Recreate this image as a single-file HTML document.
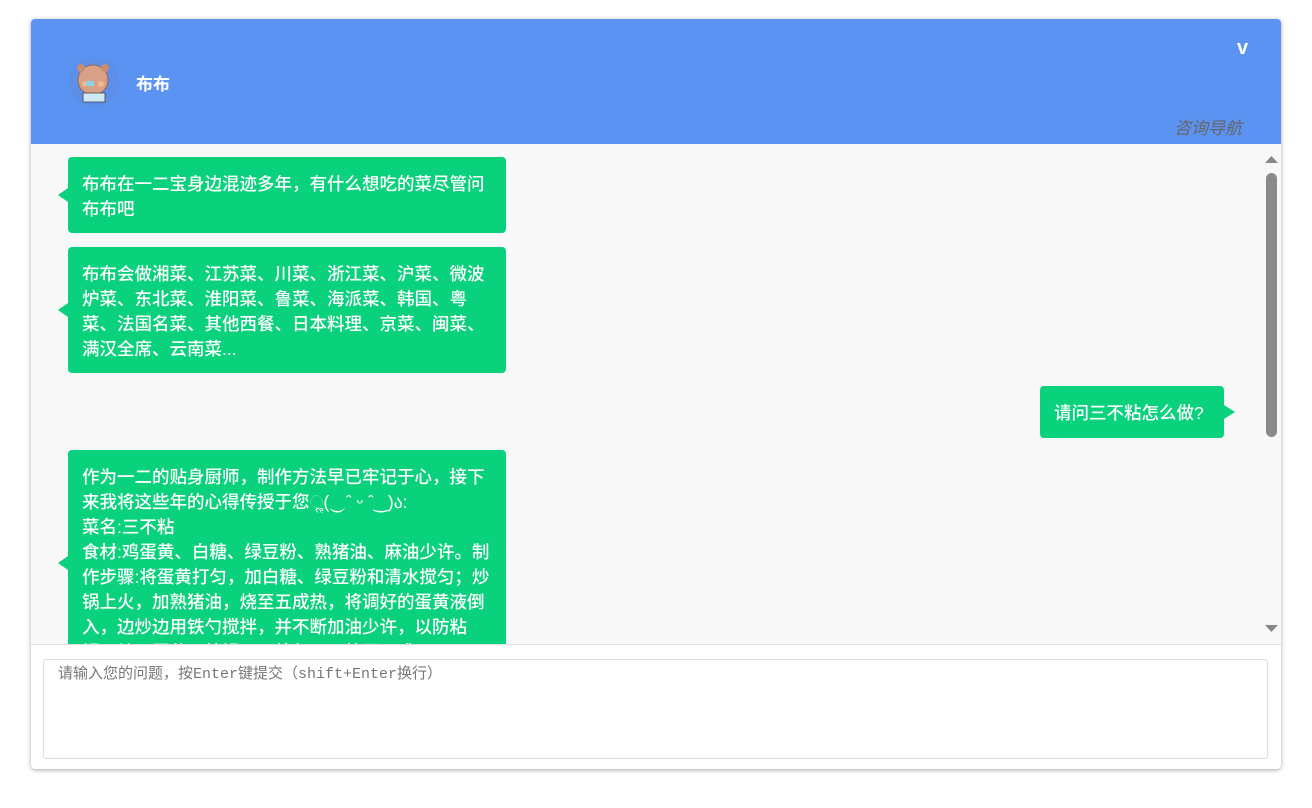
<!DOCTYPE html>
<html><head><meta charset="utf-8"><style>
*{box-sizing:border-box;margin:0;padding:0}
body{width:1312px;height:808px;background:#fff;font-family:"Liberation Sans","Noto Sans CJK SC",sans-serif;position:relative;overflow:hidden}
.win{position:absolute;left:31px;top:19px;width:1250px;height:750px;background:#fff;border-radius:4px;box-shadow:0 1px 5px rgba(0,0,0,.35);overflow:hidden}
.hd{position:absolute;left:0;top:0;width:1250px;height:125px;background:#5b93f2}
.av{position:absolute;left:38px;top:38px;width:50px;height:50px;border-radius:50%;background:#5d8fe8;overflow:hidden}
.name{position:absolute;left:105px;top:51px;color:#fff;font-size:17px;font-weight:bold}
.v{position:absolute;left:1206px;top:18px;color:#fff;font-size:20px;font-weight:bold}
.nav{position:absolute;left:1143px;top:95px;color:#666;font-size:17px;font-style:italic}
.chat{position:absolute;left:0;top:125px;width:1250px;height:500px;background:#f8f8f8;overflow:hidden}
.b{position:absolute;background:#09d17c;color:#fff;font-size:17.5px;line-height:25px;padding:15px 14px 11px 14px;border-radius:4px;font-weight:500}
.l{left:37px;width:438px}
.l:before{content:"";position:absolute;left:-10px;top:50%;margin-top:-7px;border:7px solid transparent;border-right:10px solid #09d17c;border-left:0}
.r:after{content:"";position:absolute;right:-11px;top:50%;margin-top:-7px;border:7px solid transparent;border-left:11px solid #09d17c;border-right:0}
.sb{position:absolute;left:1231px;top:0;width:19px;height:500px;background:#f8f8f8}
.th{position:absolute;left:4px;top:29px;width:11px;height:264px;background:#8a8a8a;border-radius:6px}
.inp{position:absolute;left:0;top:625px;width:1250px;height:125px;border-top:1px solid #ddd}
.ta{position:absolute;left:12px;top:14px;width:1225px;height:100px;border:1px solid #ddd;border-radius:3px;color:#777;font-family:"Liberation Mono","WenQuanYi Zen Hei",monospace;font-size:15px;padding:5px 14px;line-height:20px}
</style></head><body>
<div class="win">
<div class="hd">
<div class="av"><svg width="50" height="50"><ellipse cx="24" cy="23" rx="15" ry="15" fill="#d9a086" stroke="#8a5a48" stroke-width=".8"/><circle cx="12" cy="11" r="4" fill="#c98c72"/><circle cx="36" cy="11" r="4" fill="#c98c72"/><circle cx="16" cy="27" r="3" fill="#f4b887"/><circle cx="32" cy="27" r="3" fill="#f4b887"/><rect x="17" y="24" width="8" height="5" fill="#8cd0f0"/><rect x="14" y="36" width="22" height="9" fill="#cfe8f4" stroke="#444" stroke-width=".8"/></svg></div>
<div class="name">布布</div>
<div class="v">v</div>
<div class="nav">咨询导航</div>
</div>
<div class="chat">
<div class="b l" style="top:13px">布布在一二宝身边混迹多年，有什么想吃的菜尽管问布布吧</div>
<div class="b l" style="top:103px">布布会做湘菜、江苏菜、川菜、浙江菜、沪菜、微波炉菜、东北菜、淮阳菜、鲁菜、海派菜、韩国、粤菜、法国名菜、其他西餐、日本料理、京菜、闽菜、满汉全席、云南菜...</div>
<div class="b r" style="left:1009px;top:242px;width:184px;height:52px">请问三不粘怎么做?</div>
<div class="b l" style="top:306px">作为一二的贴身厨师，制作方法早已牢记于心，接下来我将这些年的心得传授于您ૢ(‿ˆ ᵕ ˆ‿)ა:<br>菜名:三不粘<br>食材:鸡蛋黄、白糖、绿豆粉、熟猪油、麻油少许。制作步骤:将蛋黄打匀，加白糖、绿豆粉和清水搅匀；炒锅上火，加熟猪油，烧至五成热，将调好的蛋黄液倒入，边炒边用铁勺搅拌，并不断加油少许，以防粘锅，炒至蛋黄不粘锅、不粘勺、不粘牙即成。</div>
<div class="sb"><svg width="19" height="500" style="position:absolute;left:0;top:0"><path d="M3 19 L9.5 12 L16 19Z" fill="#888"/><path d="M3 481 L9.5 488 L16 481Z" fill="#888"/></svg><div class="th"></div></div>
</div>
<div class="inp"><div class="ta">请输入您的问题，按Enter键提交（shift+Enter换行）</div></div>
</div>
</body></html>
